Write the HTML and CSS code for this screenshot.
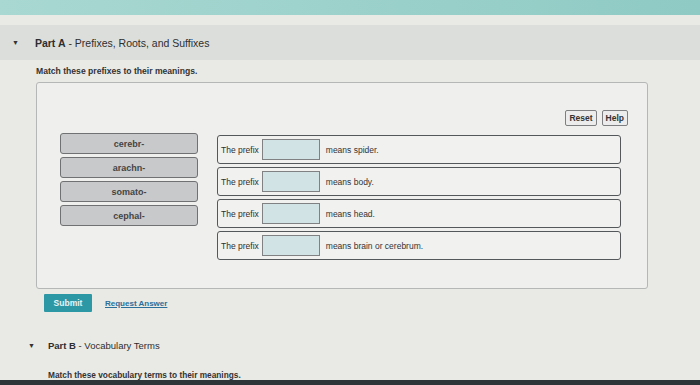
FILE: index.html
```html
<!DOCTYPE html>
<html lang="en">
<head>
  <meta charset="UTF-8" />
  <title>Part A - Prefixes, Roots, and Suffixes</title>
  <link rel="stylesheet" href="styles.css">
</head>
<body>
  <div class="topbar"></div>

  <div class="part-head part-a">
    <span class="caret">&#9660;</span>
    <span><b>Part A</b> - Prefixes, Roots, and Suffixes</span>
  </div>

  <div class="part-body">
    <p class="prompt">Match these prefixes to their meanings.</p>

    <div class="activity">
      <div class="tools">
        <button class="tool">Reset</button>
        <button class="tool">Help</button>
      </div>

      <div class="match">
        <div class="bank">
          <div class="chip">cerebr-</div>
          <div class="chip">arachn-</div>
          <div class="chip">somato-</div>
          <div class="chip">cephal-</div>
        </div>

        <div class="targets">
          <div class="target"><span>The prefix</span><span class="drop"></span><span class="means">means spider.</span></div>
          <div class="target"><span>The prefix</span><span class="drop"></span><span class="means">means body.</span></div>
          <div class="target"><span>The prefix</span><span class="drop"></span><span class="means">means head.</span></div>
          <div class="target"><span>The prefix</span><span class="drop"></span><span class="means">means brain or cerebrum.</span></div>
        </div>
      </div>
    </div>

    <div class="actions">
      <button class="submit">Submit</button>
      <a class="request" href="#">Request Answer</a>
    </div>
  </div>

  <div class="part-head part-b">
    <span class="caret">&#9660;</span>
    <span><b>Part B</b> - Vocabulary Terms</span>
  </div>
  <p class="prompt prompt-b">Match these vocabulary terms to their meanings.</p>

  <div class="bottombar"></div>
</body>
</html>
```

FILE: styles.css
```css
* { margin: 0; padding: 0; box-sizing: border-box; }
html, body {
  height: 100%;
  overflow: hidden;
}
body {
  font-family: 'Liberation Sans', Arial, sans-serif;
  background: #e9e9e5;
  color: #2e2e2e;
  display: flex;
  flex-direction: column;
}

.topbar {
  height: 15px;
  background: linear-gradient(90deg, #a9d8d2, #8fcac4);
}

/* Part headers */
.part-head {
  display: flex;
  align-items: center;
  color: #2e2e2e;
}
.part-a {
  margin-top: 10px;
  height: 35px;
  padding-left: 12px;
  font-size: 10.5px;
  background: #dcdedc;
}
.part-a .caret { margin-right: 16px; }
.caret {
  font-size: 7px;
  color: #333;
}
.part-head b { font-weight: bold; }

.prompt {
  font-size: 8.6px;
  font-weight: bold;
  color: #333;
}
.part-body {
  padding: 6px 52px 0 36px;
}

/* Matching activity */
.activity {
  margin-top: 6px;
  height: 207px;
  border: 1px solid #b5b7b6;
  border-radius: 3px;
  background: #efefed;
  padding: 27px 19px 0 23px;
}
.tools {
  display: flex;
  justify-content: flex-end;
  gap: 5px;
}
.tool {
  font-family: inherit;
  font-size: 8.5px;
  font-weight: bold;
  color: #333;
  background: #ececec;
  border: 1px solid #7d7f80;
  border-radius: 2px;
  padding: 2px 3px;
}

.match {
  display: flex;
  margin-top: 7px;
  margin-right: 7px;
}
.bank {
  width: 138px;
  display: flex;
  flex-direction: column;
  gap: 3px;
}
.chip {
  height: 21px;
  background: #c8c9ca;
  border: 1px solid #6f7172;
  border-radius: 3px;
  display: flex;
  align-items: center;
  justify-content: center;
  font-size: 9px;
  font-weight: bold;
  color: #444;
}
.targets {
  flex: 1;
  margin-left: 19px;
  margin-top: 2px;
  display: flex;
  flex-direction: column;
  gap: 3px;
}
.target {
  height: 29px;
  border: 1px solid #55585a;
  border-radius: 3px;
  background: #f1f1ef;
  display: flex;
  align-items: center;
  padding-left: 3px;
  font-size: 8.5px;
  color: #2e2e2e;
}
.drop {
  width: 58px;
  height: 21px;
  margin: 0 6px 0 3px;
  border: 1px solid #7f8182;
  background: #d2e3e5;
}
.means { color: #333; }

/* Submit row */
.actions {
  display: flex;
  align-items: center;
  gap: 13px;
  margin-top: 5px;
  padding-left: 8px;
}
.submit {
  font-family: inherit;
  font-size: 8.5px;
  font-weight: bold;
  color: #e8f3f4;
  background: #2c98a6;
  border: none;
  border-radius: 1px;
  width: 48px;
  height: 18px;
}
.request {
  font-size: 8px;
  font-weight: bold;
  color: #2b6f9a;
}

.part-b {
  margin-top: 28px;
  padding-left: 28px;
  font-size: 9.5px;
}
.part-b .caret { margin-right: 13px; }
.prompt-b {
  margin-top: 19px;
  padding-left: 48px;
  font-size: 8.3px;
}

.bottombar {
  margin-top: auto;
  height: 5px;
  background: #2e3338;
}
```
